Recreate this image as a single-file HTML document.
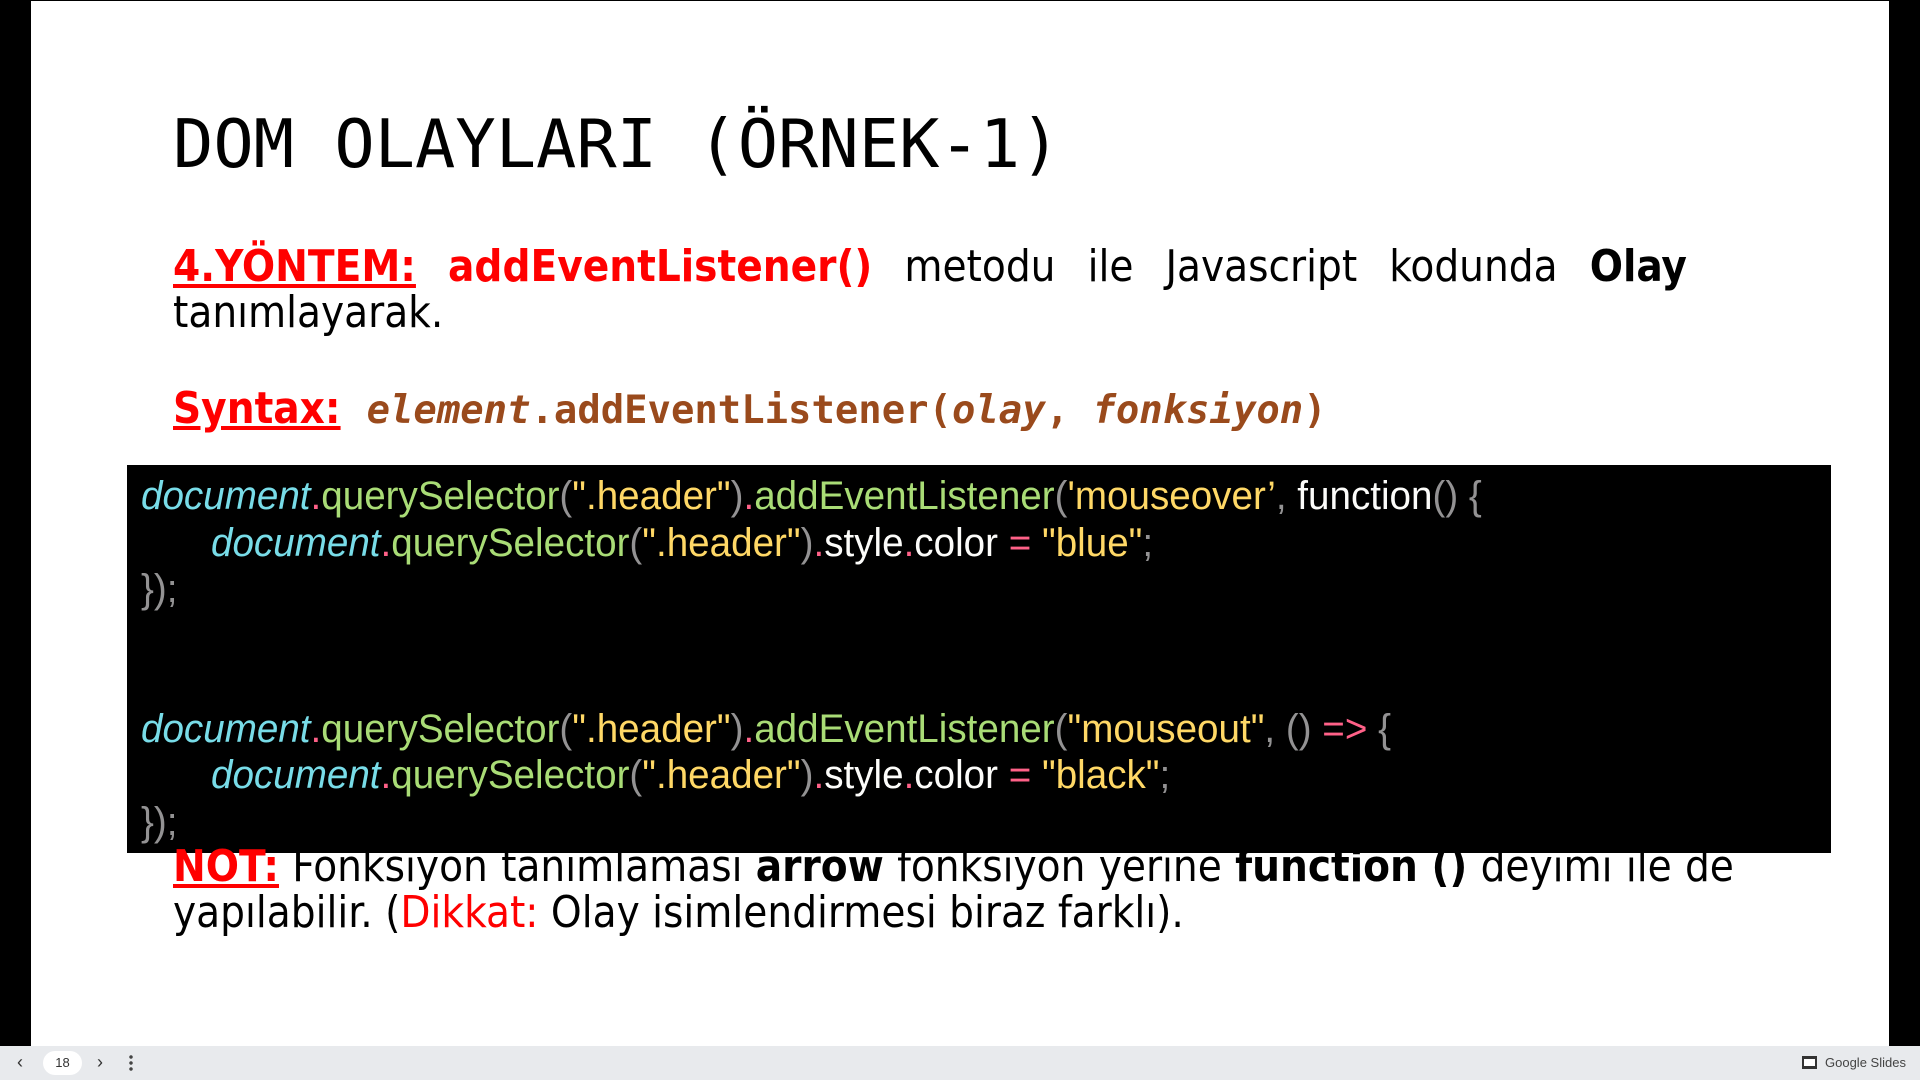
<!DOCTYPE html>
<html><head><meta charset="utf-8"><style>
html,body{margin:0;padding:0;width:1920px;height:1080px;overflow:hidden;background:#000;}
.slide{position:absolute;left:31px;top:1px;width:1858px;height:1045px;background:#fff;}
.t{position:absolute;white-space:nowrap;}
.title{left:173px;top:111px;font-family:"DejaVu Sans Mono",monospace;font-size:67px;color:#000;line-height:1;}
.p{font-family:"DejaVu Sans Condensed","DejaVu Sans",sans-serif;font-stretch:condensed;font-size:43.5px;color:#000;line-height:46px;}
.red{color:#ff0000;font-weight:bold;}
.u{text-decoration:underline;}
.mono{font-family:"DejaVu Sans Mono",monospace;color:#9a4a1c;font-size:38.9px;font-weight:bold;}
.code{position:absolute;left:127px;top:465px;width:1704px;height:388px;background:#000;}
.cl{position:absolute;left:14px;white-space:nowrap;font-family:"Liberation Sans",Arial,sans-serif;font-size:40px;transform:scaleX(0.965);transform-origin:left;color:#939293;line-height:1;}
.c{color:#78dce8;font-style:italic}.k{color:#ff6188}.g{color:#a9dc76}.y{color:#ffd866}.w{color:#fcfcfa}
.bar{position:absolute;left:0;top:1046px;width:1920px;height:34px;background:#e8eaed;font-family:"Liberation Sans",sans-serif;}
</style></head><body>
<div class="slide"></div>
<div class="t title">DOM OLAYLARI (ÖRNEK-1)</div>
<div class="t p" style="left:173px;top:244px;width:1514px;">
<div style="display:flex;justify-content:space-between;"><span><span class="red u">4.YÖNTEM:</span></span><span class="red">addEventListener()</span><span>metodu</span><span>ile</span><span>Javascript</span><span>kodunda</span><span style="font-weight:bold">Olay</span></div>
<div>tanımlayarak.</div></div>
<div class="t p" style="left:173px;top:386px;"><span class="red u">Syntax:</span><span style="display:inline-block;width:26px"></span><span class="mono"><i>element</i>.addEventListener(<i>olay</i>, <i>fonksiyon</i>)</span></div>
<div class="code">
<div class="cl" style="top:11px"><span class="c">document</span><span class="k">.</span><span class="g">querySelector</span>(<span class="y">".header"</span>)<span class="k">.</span><span class="g">addEventListener</span>(<span class="y">'mouseover’</span>, <span class="w">function</span>() {</div>
<div class="cl" style="top:58px;left:84px"><span class="c">document</span><span class="k">.</span><span class="g">querySelector</span>(<span class="y">".header"</span>)<span class="k">.</span><span class="w">style</span><span class="k">.</span><span class="w">color</span> <span class="k">=</span> <span class="y">"blue"</span>;</div>
<div class="cl" style="top:104px">});</div>
<div class="cl" style="top:244px"><span class="c">document</span><span class="k">.</span><span class="g">querySelector</span>(<span class="y">".header"</span>)<span class="k">.</span><span class="g">addEventListener</span>(<span class="y">"mouseout"</span>, () <span class="k">=&gt;</span> {</div>
<div class="cl" style="top:290px;left:84px"><span class="c">document</span><span class="k">.</span><span class="g">querySelector</span>(<span class="y">".header"</span>)<span class="k">.</span><span class="w">style</span><span class="k">.</span><span class="w">color</span> <span class="k">=</span> <span class="y">"black"</span>;</div>
<div class="cl" style="top:337px">});</div>
</div>
<div class="t p" style="left:173px;top:844px;width:1561px;">
<div style="display:flex;justify-content:space-between;"><span class="red u">NOT:</span><span>Fonksiyon</span><span>tanımlaması</span><b>arrow</b><span>fonksiyon</span><span>yerine</span><b>function ()</b><span>deyimi</span><span>ile</span><span>de</span></div>
<div>yapılabilir. (<span style="color:#ff0000">Dikkat:</span> Olay isimlendirmesi biraz farklı).</div></div>
<div class="bar">
<div class="t" style="left:17px;top:6px;font-size:18px;color:#333">&#8249;</div>
<div class="t" style="left:43px;top:5px;width:39px;height:24px;border-radius:12px;background:#fff;font-size:13px;text-align:center;line-height:24px;color:#333">18</div>
<div class="t" style="left:97px;top:6px;font-size:18px;color:#333">&#8250;</div>
<div class="t" style="left:129px;top:8px;width:4px;height:18px;background:radial-gradient(circle,#444 1.5px,transparent 2px) 0 0/4px 6px;"></div>
<div class="t" style="left:1802px;top:10px;width:15px;height:13px;border:2px solid #333;border-width:3px 2px;box-sizing:border-box;background:#fff"></div>
<div class="t" style="left:1825px;top:9px;font-size:13px;color:#444">Google Slides</div>
</div>
</body></html>
